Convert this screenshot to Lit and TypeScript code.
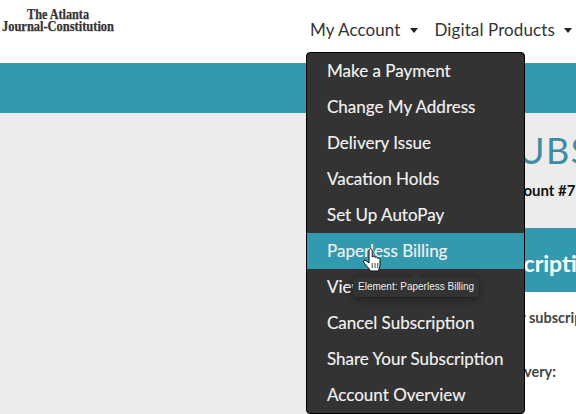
import { html, css, LitElement } from 'lit';
import { customElement } from 'lit/decorators.js';

const MENU_ITEMS = [
  'Make a Payment',
  'Change My Address',
  'Delivery Issue',
  'Vacation Holds',
  'Set Up AutoPay',
  'Paperless Billing',
  'View Statements',
  'Cancel Subscription',
  'Share Your Subscription',
  'Account Overview',
];

@customElement('app-root')
export class AppRoot extends LitElement {
  static styles = css`
    :host {
      display: block;
      position: relative;
      width: 576px;
      height: 414px;
      overflow: hidden;
      background: #ececec;
      font-family: Lato, 'Noto Sans', sans-serif;
      color: #333;
    }

    .header {
      height: 63px;
      background: #fff;
      display: flex;
    }

    .logo {
      flex: none;
      width: 116px;
      height: 36px;
      font-family: 'Liberation Serif', serif;
      font-weight: 700;
      font-size: 14px;
      fill: #333;
      stroke: #333;
      stroke-width: 0.25;
    }

    .nav {
      flex: none;
      display: flex;
      gap: 17px;
      margin-left: 194px;
      padding-top: 19px;
      font-size: 17px;
      letter-spacing: 0.1px;
      line-height: 22px;
      white-space: nowrap;
    }

    .nav-item {
      display: flex;
      align-items: center;
      gap: 9px;
      height: 22px;
    }

    .caret {
      width: 0;
      height: 0;
      border-left: 4.5px solid transparent;
      border-right: 4.5px solid transparent;
      border-top: 5px solid #222;
    }

    .band {
      height: 50px;
      background: #3299ae;
    }

    .main {
      padding-left: 320px;
    }

    .heading {
      margin: 0;
      padding: 15px 0 0 177px;
      font-size: 36px;
      letter-spacing: 1.5px;
      line-height: 44px;
      font-weight: 400;
      color: #3f8ca2;
      white-space: nowrap;
    }

    .account {
      padding: 8px 0 0 179px;
      font-size: 15px;
      line-height: 20px;
      font-weight: 700;
      color: #111;
      white-space: nowrap;
    }

    .card-title {
      margin-top: 28px;
      height: 64px;
      padding-left: 155px;
      background: #3299ae;
      color: #fff;
      font-size: 23px;
      line-height: 70px;
      font-weight: 700;
      white-space: nowrap;
      overflow: hidden;
    }

    .card-body {
      height: 122px;
      padding-top: 16px;
      background: #fff;
      font-size: 14.5px;
      font-weight: 700;
      color: #444;
      white-space: nowrap;
    }

    .card-line {
      height: 20px;
      line-height: 20px;
      margin-bottom: 34px;
    }

    .card-line.current {
      padding-left: 176px;
    }

    .card-line.delivery {
      padding-left: 178px;
    }

    .menu {
      position: absolute;
      left: 306px;
      top: 52px;
      width: 217px;
      background: #333;
      border: 1px solid #000;
      border-radius: 4px;
    }

    .menu-item {
      height: 36px;
      line-height: 36px;
      padding-left: 20px;
      font-size: 17px;
      color: #f2f2f2;
      -webkit-text-stroke: 0.15px #f2f2f2;
      white-space: nowrap;
    }

    .menu-item.active {
      background: #3299ae;
    }

    .tooltip {
      position: absolute;
      left: 353px;
      top: 277px;
      width: 126px;
      height: 20px;
      box-sizing: border-box;
      padding-left: 5px;
      background: #333;
      border-radius: 4px;
      box-shadow: 0 2px 8px rgb(0 0 0 / 0.45);
      font-family: 'Liberation Sans', sans-serif;
      font-size: 10px;
      line-height: 20px;
      color: #eee;
      white-space: nowrap;
    }

    .tooltip::before {
      content: '';
      position: absolute;
      left: 59px;
      top: -4px;
      border-left: 4px solid transparent;
      border-right: 4px solid transparent;
      border-bottom: 4px solid #333;
    }

    .cursor {
      position: absolute;
      left: 362px;
      top: 247px;
      width: 20px;
      height: 26px;
    }
  `;

  render() {
    return html`
      <div class="header">
        <svg class="logo" viewBox="0 0 116 36">
          <text x="27" y="19" textLength="62" lengthAdjust="spacingAndGlyphs">The Atlanta</text>
          <text x="2" y="31" textLength="112" lengthAdjust="spacingAndGlyphs">Journal-Constitution</text>
        </svg>
        <div class="nav">
          <div class="nav-item">My Account <i class="caret"></i></div>
          <div class="nav-item">Digital Products <i class="caret"></i></div>
        </div>
      </div>
      <div class="band"></div>
      <div class="main">
        <h1 class="heading">SUBSCRIPTIONS</h1>
        <div class="account">Account #7</div>
        <div class="card-title">Subscription</div>
        <div class="card-body">
          <div class="card-line current">Your subscription</div>
          <div class="card-line delivery">Delivery:</div>
        </div>
      </div>
      <div class="menu">
        ${MENU_ITEMS.map(
          (item, i) =>
            html`<div class="menu-item ${i === 5 ? 'active' : ''}">${item}</div>`,
        )}
      </div>
      <div class="tooltip">Element: Paperless Billing</div>
      <svg class="cursor" viewBox="0 0 20 26">
        <path
          d="M7 3.2c0-1.8 3.2-1.8 3.2 0V10c.6-1.1 2.7-1 2.9.5.6-.9 2.5-.6 2.6.9.7-.6 2.3-.2 2.3 1.2V18c0 2.5-1.2 3.6-1.6 6H8.5c-1-2.5-4-4.6-6.8-8.7-.9-1.5.9-2.9 2.2-1.7L7 16z"
          fill="#fff"
          stroke="#111"
          stroke-width="1"
          stroke-linejoin="round"
        />
        <path d="M10.2 16v5M13 16v5M15.8 16v5" stroke="#111" stroke-width="0.8" />
      </svg>
    `;
  }
}

declare global {
  interface HTMLElementTagNameMap {
    'app-root': AppRoot;
  }
}
